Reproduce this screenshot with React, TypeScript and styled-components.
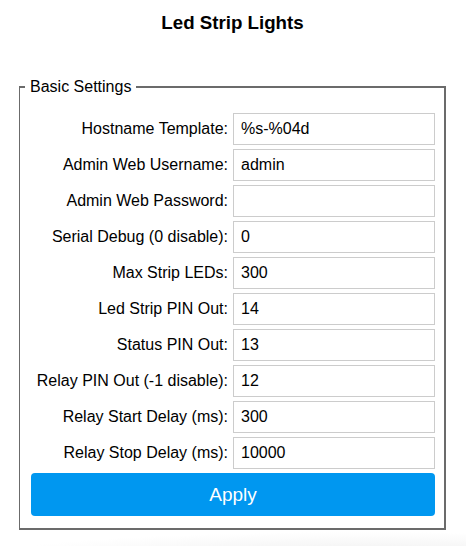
import React from "react";
import styled, { createGlobalStyle } from "styled-components";

const GlobalStyle = createGlobalStyle`
  html, body {
    margin: 0;
    padding: 0;
  }
  body {
    font-family: "Liberation Sans", Arial, Helvetica, sans-serif;
    color: #000;
    min-height: 546px;
    background:
      radial-gradient(ellipse 380px 26px at 78% 100%, #eeeeee 0%, rgba(255,255,255,0) 100%),
      #ffffff;
  }
`;

const Page = styled.div`
  padding: 0 20px 0 19px;
  min-height: 546px;
  box-sizing: border-box;
`;

const Title = styled.h3`
  margin: 12px 0 0;
  font-size: 18.72px;
  line-height: 22px;
  font-weight: bold;
  text-align: center;
`;

const Fieldset = styled.fieldset`
  margin: 44px 0 0;
  padding: 17px 9px 12px 11px;
  border-top: 2px solid #6b6b6b;
  border-right: 2px solid #6b6b6b;
  border-bottom: 2px solid #6b6b6b;
  border-left: 1px solid #6b6b6b;
  min-width: 0;
`;

const Legend = styled.legend`
  margin-left: -6px;
  padding: 0 5px;
  font-size: 16px;
  line-height: 18px;
`;

const Form = styled.div`
  display: grid;
  grid-template-columns: 198px 202px;
  column-gap: 4px;
  row-gap: 4px;
`;

const Label = styled.label`
  align-self: center;
  text-align: right;
  font-size: 16px;
  line-height: 18px;
  padding-right: 1px;
  white-space: nowrap;
`;

const Input = styled.input`
  box-sizing: border-box;
  height: 32px;
  width: 100%;
  margin: 0;
  padding: 0 7px;
  border: 1px solid #cccccc;
  border-radius: 0;
  background: #fff;
  font-family: "Liberation Sans", Arial, Helvetica, sans-serif;
  font-size: 16px;
  color: #000;
  outline: none;
`;

const ApplyButton = styled.button`
  grid-column: 1 / -1;
  height: 43px;
  margin: 0;
  border: none;
  border-radius: 4px;
  background: #0097f0;
  color: #fff;
  font-family: "Liberation Sans", Arial, Helvetica, sans-serif;
  font-size: 19px;
  cursor: pointer;
`;

const fields: { label: string; value: string; type?: string }[] = [
  { label: "Hostname Template:", value: "%s-%04d" },
  { label: "Admin Web Username:", value: "admin" },
  { label: "Admin Web Password:", value: "", type: "password" },
  { label: "Serial Debug (0 disable):", value: "0" },
  { label: "Max Strip LEDs:", value: "300" },
  { label: "Led Strip PIN Out:", value: "14" },
  { label: "Status PIN Out:", value: "13" },
  { label: "Relay PIN Out (-1 disable):", value: "12" },
  { label: "Relay Start Delay (ms):", value: "300" },
  { label: "Relay Stop Delay (ms):", value: "10000" },
];

export default function App() {
  return (
    <>
      <GlobalStyle />
      <Page>
        <Title>Led Strip Lights</Title>
        <Fieldset>
          <Legend>Basic Settings</Legend>
          <Form>
            {fields.map((f, i) => (
              <React.Fragment key={i}>
                <Label htmlFor={`f${i}`}>{f.label}</Label>
                <Input id={`f${i}`} type={f.type || "text"} defaultValue={f.value} />
              </React.Fragment>
            ))}
            <ApplyButton type="button">Apply</ApplyButton>
          </Form>
        </Fieldset>
      </Page>
    </>
  );
}
